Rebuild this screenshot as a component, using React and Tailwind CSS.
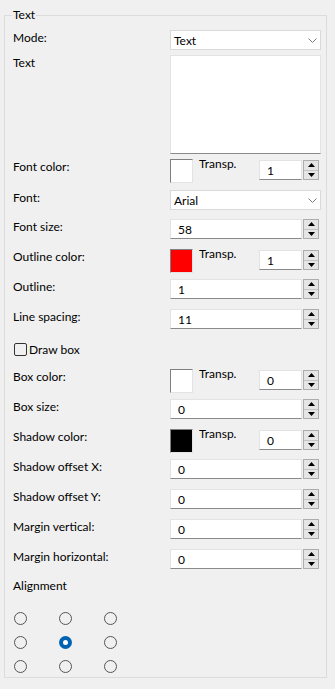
import React from 'react';

const font = "font-['Segoe_UI','Lato',sans-serif] text-[12px] text-black";

function Chevron() {
  return (
    <svg width="9" height="5" viewBox="0 0 9 5" className="mr-[3px]">
      <path d="M0.5 0.5 L4.5 4.5 L8.5 0.5" fill="none" stroke="#7a7a7a" strokeWidth="1" />
    </svg>
  );
}

function SpinButtons() {
  return (
    <div className="ml-[1px] flex w-[16px] flex-col border border-[#adadad] bg-[#e5e5e5]">
      <div className="flex flex-1 items-center justify-center border-b border-[#c4c4c4]">
        <svg width="7" height="4" viewBox="0 0 7 4"><path d="M0 4 L3.5 0 L7 4 Z" fill="#000" /></svg>
      </div>
      <div className="flex flex-1 items-center justify-center">
        <svg width="7" height="4" viewBox="0 0 7 4"><path d="M0 0 L3.5 4 L7 0 Z" fill="#000" /></svg>
      </div>
    </div>
  );
}

function Spin({ value, small }) {
  return (
    <div className={`flex h-[20px] ${small ? 'w-[60px]' : 'w-[149px]'}`}>
      <div className="flex flex-1 items-center border border-[#e3e3e3] border-b-[#8a8a8a] bg-white pl-[7px] pt-[2px]">{value}</div>
      <SpinButtons />
    </div>
  );
}

function Combo({ value }) {
  return (
    <div className="flex h-[20px] w-[151px] items-center justify-between border border-[#d9d9d9] bg-white pl-[3px] pt-[1px]">
      <span>{value}</span>
      <Chevron />
    </div>
  );
}

function Swatch({ color }) {
  return <div className={`h-[24px] w-[23px] border border-[#7f7f7f] border-r-[#e3e3e3] border-b-[#e3e3e3] ${color}`} />;
}

function Row({ label, children, h = 'h-[30px]' }) {
  return (
    <div className={`flex ${h}`}>
      <div className="w-[157px] pt-[1px] leading-[14px]">{label}</div>
      {children}
    </div>
  );
}

function ColorRow({ label, color, value }) {
  return (
    <Row label={label}>
      <div className="flex">
        <Swatch color={color} />
        <span className="ml-[6px] w-[60px] leading-[10px]">Transp.</span>
        <div className="mt-[1px]"><Spin value={value} small /></div>
      </div>
    </Row>
  );
}

function Radio({ checked }) {
  if (checked) {
    return (
      <div className="flex h-[13px] w-[13px] items-center justify-center rounded-full bg-[#0063b1]">
        <div className="h-[5px] w-[5px] rounded-full bg-white" />
      </div>
    );
  }
  return <div className="h-[13px] w-[13px] rounded-full border border-[#555]" />;
}

export default function App() {
  return (
    <div className={`${font} h-[689px] w-[335px] bg-[#f0f0f0] pl-[4px] pt-[15px]`}>
      <div className="relative h-[663px] w-[323px] border border-[#dcdcdc] pl-[8px]">
        <span className="absolute left-[7px] top-[-9px] bg-[#f0f0f0] px-[1px] leading-[16px]">Text</span>

        <div className="mt-[14px]">
          <Row label="Mode:" h="h-[25px]"><Combo value="Text" /></Row>
          <Row label="Text" h="h-[104px]">
            <div className="h-[99px] w-[151px] border border-[#e3e3e3] border-b-[#8a8a8a] bg-white" />
          </Row>
          <ColorRow label="Font color:" color="bg-white" value="1" />
          <div className="mt-[1px]">
            <Row label="Font:" h="h-[29px]"><Combo value="Arial" /></Row>
          </div>
          <Row label="Font size:"><Spin value="58" /></Row>
          <ColorRow label="Outline color:" color="bg-[#ff0000]" value="1" />
          <Row label="Outline:"><Spin value="1" /></Row>
          <Row label="Line spacing:"><Spin value="11" /></Row>
          <div className="flex h-[30px] items-start pl-[1px] pt-[4px]">
            <div className="h-[13px] w-[13px] rounded-[2px] border border-[#333]" />
            <span className="ml-[2px] leading-[13px]">Draw box</span>
          </div>
          <ColorRow label="Box color:" color="bg-white" value="0" />
          <Row label="Box size:"><Spin value="0" /></Row>
          <ColorRow label="Shadow color:" color="bg-black" value="0" />
          <Row label="Shadow offset X:"><Spin value="0" /></Row>
          <Row label="Shadow offset Y:"><Spin value="0" /></Row>
          <Row label="Margin vertical:"><Spin value="0" /></Row>
          <Row label="Margin horizontal:"><Spin value="0" /></Row>
          <div className="leading-[14px]">Alignment</div>
          <div className="mt-[19px] flex flex-col gap-y-[11px] pl-[1px]">
            <div className="flex gap-x-[32px]"><Radio /><Radio /><Radio /></div>
            <div className="flex gap-x-[32px]"><Radio /><Radio checked /><Radio /></div>
            <div className="flex gap-x-[32px]"><Radio /><Radio /><Radio /></div>
          </div>
        </div>
      </div>
    </div>
  );
}
